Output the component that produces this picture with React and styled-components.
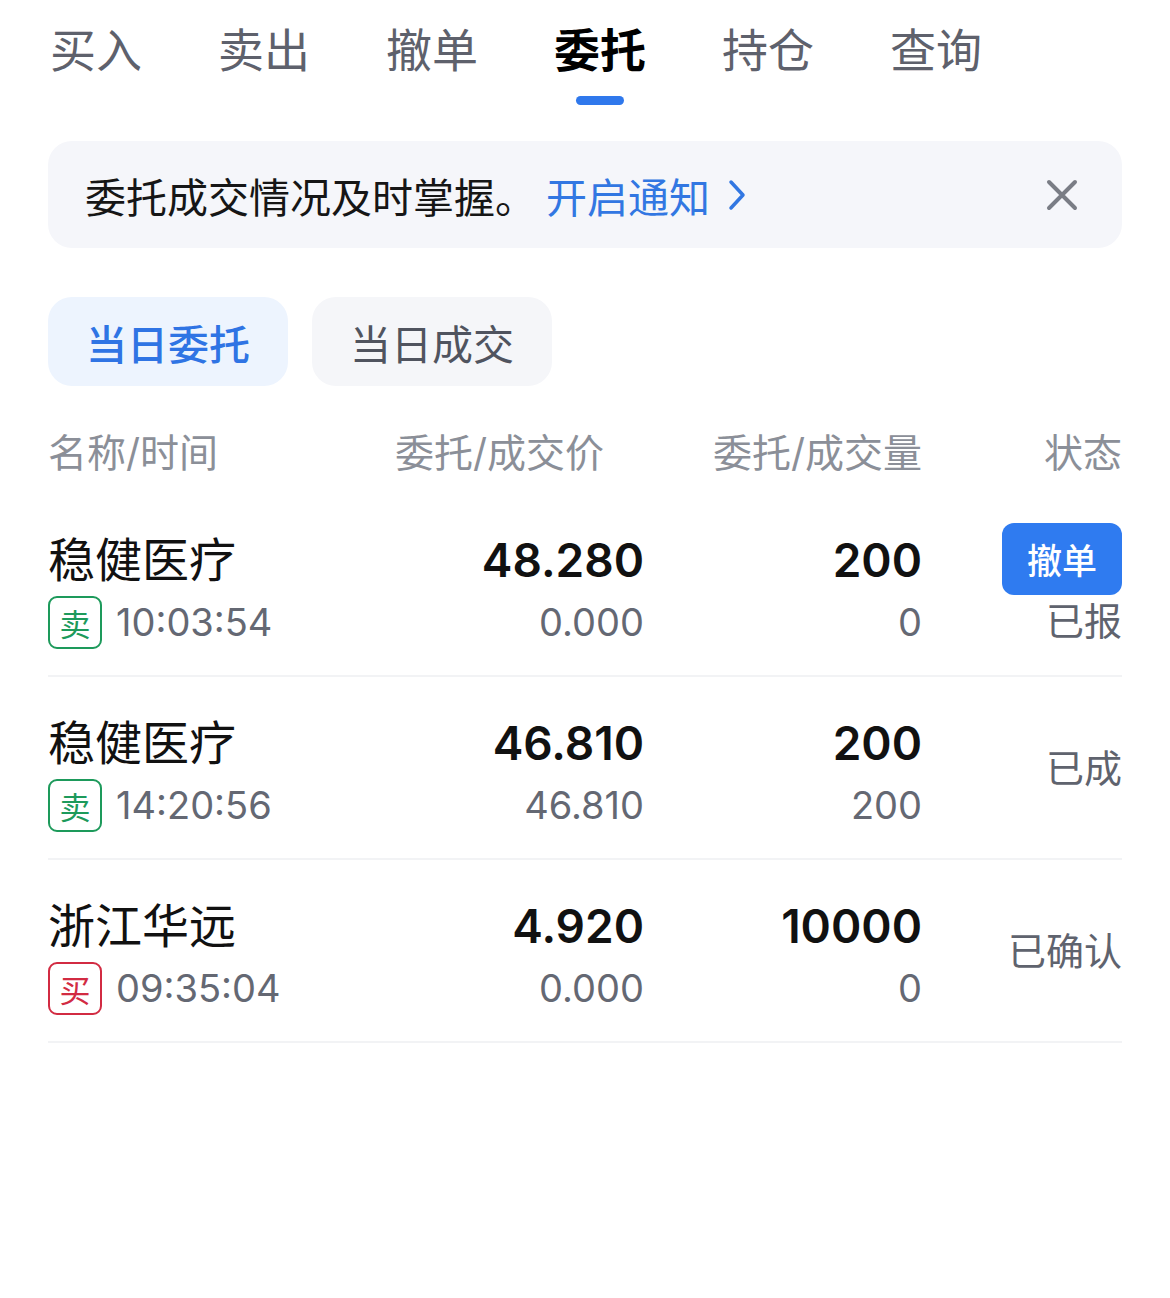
import React from 'react'
import styled, { createGlobalStyle } from 'styled-components'

const GlobalStyle = createGlobalStyle`
  body {
    margin: 0;
    background: #fff;
    font-family: Inter, "Noto Sans CJK SC", sans-serif;
    color: #111;
    text-spacing-trim: space-all;
  }
`

const Page = styled.div`
  width: 1170px;
  padding: 0 48px;
  box-sizing: border-box;
`

const TabBar = styled.div`
  display: flex;
  gap: 76px;
  padding-top: 22px;
  padding-left: 2px;
`

const Tab = styled.div`
  display: flex;
  flex-direction: column;
  align-items: center;
  font-size: 46px;
  line-height: 56px;
  font-weight: ${p => (p.$active ? 700 : 400)};
  color: ${p => (p.$active ? '#000' : '#5e616c')};
  &::after {
    content: '';
    width: 48px;
    height: 9px;
    margin-top: 18px;
    border-radius: 5px;
    background: ${p => (p.$active ? '#2f78ec' : 'transparent')};
  }
`

const Notice = styled.div`
  margin-top: 36px;
  height: 107px;
  display: flex;
  align-items: center;
  padding: 0 44px 0 37px;
  border-radius: 24px;
  background: #f5f6fa;
  font-size: 41px;
  color: #161616;
`

const NoticeText = styled.span`
  flex: 1;
  display: flex;
  align-items: center;
  white-space: nowrap;
`

const Link = styled.span`
  color: #3277e2;
  display: inline-flex;
  align-items: center;
  gap: 18px;
  margin-left: 10px;
`

const Close = styled.button`
  border: none;
  background: none;
  padding: 0;
  width: 32px;
  height: 32px;
  display: flex;
`

const SubTabs = styled.div`
  display: flex;
  gap: 24px;
  margin-top: 49px;
`

const SubTab = styled.div`
  width: 240px;
  height: 89px;
  border-radius: 24px;
  display: flex;
  align-items: center;
  justify-content: center;
  font-size: 41px;
  font-weight: ${p => (p.$active ? 500 : 400)};
  background: ${p => (p.$active ? '#edf4fe' : '#f5f6f9')};
  color: ${p => (p.$active ? '#2f74e4' : '#50545f')};
`

const Grid = styled.div`
  display: grid;
  grid-template-columns: 300px 296px 278px 200px;
`

const Header = styled(Grid)`
  margin-top: 42px;
  height: 66px;
  font-size: 39px;
  line-height: 50px;
  color: #8b8f98;
`

const HeadCell = styled.div`
  text-align: ${p => (p.$left ? 'left' : 'right')};
  padding-right: ${p => p.$inset || 0}px;
  white-space: nowrap;
`

const Row = styled(Grid)`
  height: 183px;
  box-sizing: border-box;
  border-bottom: 2px solid #f2f3f5;
`

const Cell = styled.div`
  display: flex;
  flex-direction: column;
  align-items: ${p => (p.$left ? 'flex-start' : 'flex-end')};
  gap: 6px;
  padding-top: 38px;
`

const Main = styled.div`
  font-size: ${p => (p.$num ? '46px' : '47px')};
  line-height: 56px;
  font-weight: ${p => (p.$num ? 600 : 400)};
  color: #111;
  white-space: nowrap;
`

const Sub = styled.div`
  display: flex;
  align-items: center;
  gap: 14px;
  height: 56px;
  font-size: 38px;
  color: #646873;
`

const Side = styled.span`
  width: 54px;
  height: 53px;
  box-sizing: border-box;
  border: 2px solid ${p => (p.$buy ? '#d22b42' : '#1d9a5b')};
  color: ${p => (p.$buy ? '#d22b42' : '#1d9a5b')};
  border-radius: 9px;
  display: flex;
  align-items: center;
  justify-content: center;
  font-size: 31px;
`

const Status = styled.div`
  align-self: center;
  display: flex;
  flex-direction: column;
  align-items: flex-end;
  font-size: 38px;
  line-height: 52px;
  color: #5f636e;
  white-space: nowrap;
`

const CancelBtn = styled.button`
  width: 120px;
  height: 72px;
  border: none;
  border-radius: 12px;
  background: #2f7bf0;
  color: #fff;
  font-family: inherit;
  font-size: 35px;
  font-weight: 500;
`

const tabs = ['买入', '卖出', '撤单', '委托', '持仓', '查询']

const orders = [
  { name: '稳健医疗', side: '卖', time: '10:03:54', price: '48.280', deal: '0.000', qty: '200', dealQty: '0', status: '已报', cancel: true },
  { name: '稳健医疗', side: '卖', time: '14:20:56', price: '46.810', deal: '46.810', qty: '200', dealQty: '200', status: '已成' },
  { name: '浙江华远', side: '买', time: '09:35:04', price: '4.920', deal: '0.000', qty: '10000', dealQty: '0', status: '已确认' },
]

export default function App() {
  return (
    <Page>
      <GlobalStyle />
      <TabBar>
        {tabs.map(t => (
          <Tab key={t} $active={t === '委托'}>{t}</Tab>
        ))}
      </TabBar>

      <Notice>
        <NoticeText>
          委托成交情况及时掌握。
          <Link>
            开启通知
            <svg width="18" height="32" viewBox="0 0 18 32" fill="none">
              <path d="M3 3l12 13L3 29" stroke="#3277e2" strokeWidth="3.5" strokeLinecap="round" strokeLinejoin="round" />
            </svg>
          </Link>
        </NoticeText>
        <Close>
          <svg width="32" height="32" viewBox="0 0 32 32" fill="none">
            <path d="M3 3l26 26M29 3L3 29" stroke="#7a7d85" strokeWidth="4" strokeLinecap="round" />
          </svg>
        </Close>
      </Notice>

      <SubTabs>
        <SubTab $active>当日委托</SubTab>
        <SubTab>当日成交</SubTab>
      </SubTabs>

      <Header>
        <HeadCell $left>名称/时间</HeadCell>
        <HeadCell $inset={40}>委托/成交价</HeadCell>
        <HeadCell>委托/成交量</HeadCell>
        <HeadCell>状态</HeadCell>
      </Header>

      {orders.map((o, i) => (
        <Row key={i}>
          <Cell $left>
            <Main>{o.name}</Main>
            <Sub>
              <Side $buy={o.side === '买'}>{o.side}</Side>
              {o.time}
            </Sub>
          </Cell>
          <Cell>
            <Main $num>{o.price}</Main>
            <Sub>{o.deal}</Sub>
          </Cell>
          <Cell>
            <Main $num>{o.qty}</Main>
            <Sub>{o.dealQty}</Sub>
          </Cell>
          <Status>
            {o.cancel && <CancelBtn>撤单</CancelBtn>}
            <span>{o.status}</span>
          </Status>
        </Row>
      ))}
    </Page>
  )
}
